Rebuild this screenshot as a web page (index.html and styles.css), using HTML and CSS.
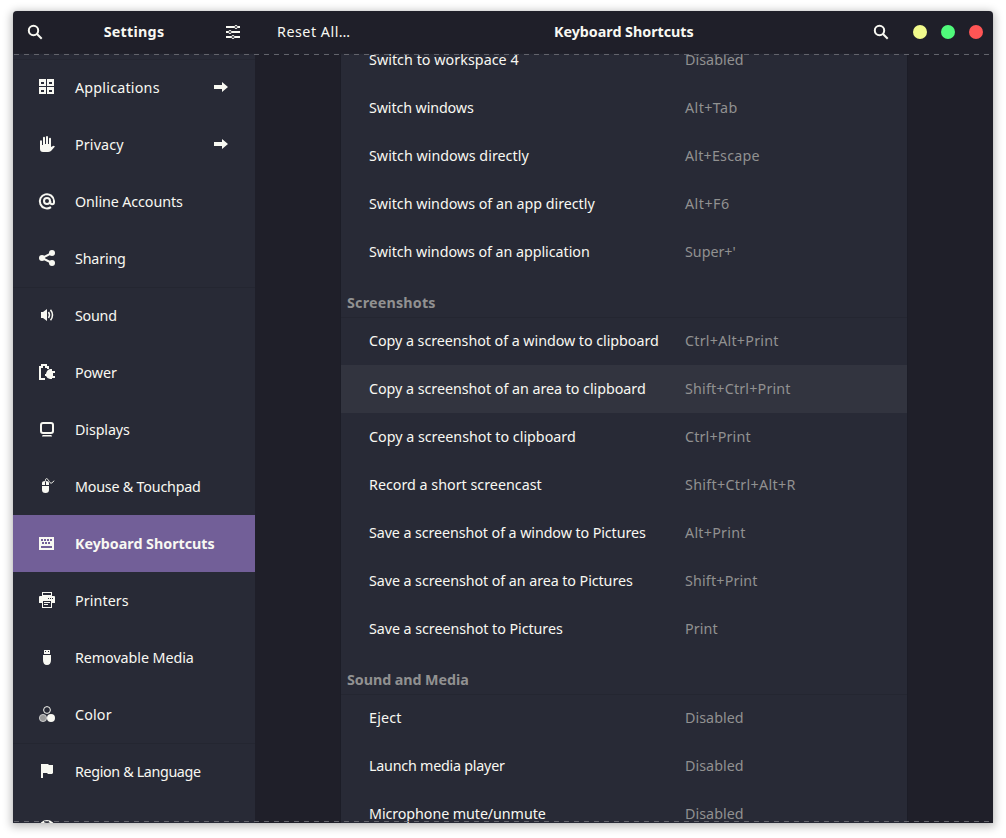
FILE: index.html
```
<!DOCTYPE html>
<html lang="en">
<head>
<meta charset="utf-8">
<title>Settings</title>
<link rel="stylesheet" href="styles.css">
</head>
<body>
<div class="window">
  <header class="header">
    <div class="header-side">
      <svg class="icon" viewBox="0 0 16 16"><circle cx="6.500" cy="6.500" r="4.700" class="ln"/><path class="ln" d="M10 10l4.700 4.700"/></svg>
      <b data-w="61">Settings</b>
      <svg class="icon" viewBox="0 0 16 16"><path d="M1 2h8v2H1zM13 2h2v2h-2zM1 7h2v2H1zM7 7h8v2H7zM1 12h5v2H1zM10 12h5v2h-5z"/><g class="thin"><circle cx="11" cy="3" r="1.5"/><circle cx="5" cy="8" r="1.5"/><circle cx="8" cy="13" r="1.5"/></g></svg>
    </div>
    <div class="header-main">
      <span class="reset" data-w="74">Reset All…</span>
      <b class="title" data-w="140">Keyboard Shortcuts</b>
      <svg class="icon find" viewBox="0 0 16 16"><circle cx="6.500" cy="6.500" r="4.700" class="ln"/><path class="ln" d="M10 10l4.700 4.700"/></svg>
      <i class="dot yellow"></i><i class="dot green"></i><i class="dot red"></i>
    </div>
  </header>
  <div class="body">
    <nav class="sidebar">
      <div class="item"><svg class="icon" viewBox="0 0 16 16"><path fill-rule="evenodd" d="M0 0h7v7H0zM2 3v2h3V3zM8 0h7v7H8zM10 3v2h3V3zM0 8h7v7H0zM2 11v2h3v-2zM8 8h7v7H8zM10 11v2h3v-2z"/></svg><span data-w="85">Applications</span><svg class="icon go" viewBox="0 0 16 16"><path d="M1 6h8V3l6 5-6 5v-3H1z"/></svg></div>
      <div class="item"><svg class="icon" viewBox="0 0 16 16"><path d="M1 5.2a1 1 0 0 1 2 0V9h1V1.8a1 1 0 0 1 2 0V8h1V1a1 1 0 0 1 2 0v7h1V2.8a1 1 0 0 1 2 0V11l2.5-1.3c1 0 1.7.8 1 1.3L12 15q-1.500 1-3 1H4q-3 0-3-3z"/></svg><span data-w="49">Privacy</span><svg class="icon go" viewBox="0 0 16 16"><path d="M1 6h8V3l6 5-6 5v-3H1z"/></svg></div>
      <div class="item"><svg class="icon" viewBox="0 0 16 16"><path class="ln" d="M12 14.1A7.100 7.100 0 1 1 15 8v1.200q0 2-1.800 2T11.300 9.200V8"/><circle cx="8" cy="8" r="3" class="ln"/></svg><span data-w="108">Online Accounts</span></div>
      <div class="item"><svg class="icon" viewBox="0 0 16 16"><path class="ln" d="M13 3L3 8l10 5"/><circle cx="13" cy="3" r="3"/><circle cx="3" cy="8" r="3"/><circle cx="13" cy="13" r="3"/></svg><span data-w="51">Sharing</span></div>
      <div class="item ruled"><svg class="icon" viewBox="0 0 16 16"><path d="M2 5h2l4-3v12l-4-3H2z"/><path class="arc" d="M9.500 5q2 3 0 6M11.500 2.700q4 5.300 0 10.600"/></svg><span data-w="42">Sound</span></div>
      <div class="item"><svg class="icon" viewBox="0 0 16 16"><path d="M0 2h2V0h6v2h2v3H8V4H6V2H4v2H2v10h4v2H0z"/><path d="M6 10h1q.5-4 4-5h2v2h3v2h-2v3h2v2h-3v1h-2q-3-.5-4-3H6z"/></svg><span data-w="42">Power</span></div>
      <div class="item"><svg class="icon" viewBox="0 0 16 16"><rect class="ln" x="2" y="2" width="12" height="10" rx="2"/><path d="M4 14h8q1 0 1 1.500H3q0-1.500 1-1.500z"/></svg><span data-w="55">Displays</span></div>
      <div class="item"><svg class="icon" viewBox="0 0 16 16"><path d="M3 7V5q0-2 3-2v4zM7 3q3 0 3 2v2H7zM3 8h7v4q0 3-3.500 3T3 12z"/><path class="thin" d="M6.500 3.500C6 0 8 0 9.300 2s2 4 4 2.700L15 2.700"/></svg><span data-w="126">Mouse &amp; Touchpad</span></div>
      <div class="item selected"><svg class="icon" viewBox="0 0 16 16"><path fill-rule="evenodd" d="M0 2h15v13H0zM2 4v2h2V4zM5 4v2h2V4zM8 4v2h2V4zM11 4v2h2V4zM3 7v2h2V7zM6 7v2h2V7zM9 7v2h2V7zM2 11v2h11v-2z"/></svg><span data-w="140">Keyboard Shortcuts</span></div>
      <div class="item"><svg class="icon" viewBox="0 0 16 16"><path fill-rule="evenodd" d="M3 0h10v4H3zM4 1v2h8V1zM0 5q0-1 1-1h14q1 0 1 1v6h-3v5H3v-5H0zM4 9v6h8V9zM9 6v1h1V6zM11 6v1h1V6zM13 6v1h1V6zM5 11h6v-1H5zM5 13h4v-1H5z"/></svg><span data-w="54">Printers</span></div>
      <div class="item"><svg class="icon" viewBox="0 0 16 16"><path fill-rule="evenodd" d="M5 1h6v4H5zM6 2v1h1V2zM9 2v1h1V2zM4 6h8v5q0 5-4 5t-4-5z"/></svg><span data-w="119">Removable Media</span></div>
      <div class="item"><svg class="icon" viewBox="0 0 16 16"><circle class="thin" cx="8" cy="4" r="3.400"/><circle cx="4" cy="12" r="3.600" class="gray"/><circle cx="12" cy="12" r="4"/></svg><span data-w="37">Color</span></div>
      <div class="item ruled"><svg class="icon" viewBox="0 0 16 16"><path d="M2 1h7l1 1h4v8l-1 1H9l-1-1H4v5H2z"/></svg><span data-w="126">Region &amp; Language</span></div>
      <div class="item"><svg class="icon" viewBox="0 0 16 16"><circle class="ln" cx="8" cy="8" r="7"/><circle cx="8" cy="4.500" r="1.500"/><path d="M4 6h8v1.500H10V13H9v-3H7v3H6V7.500H4z"/></svg><span data-w="113">Universal Access</span></div>
    </nav>
    <main class="content">
      <div class="list">
        <div class="row"><span data-w="150">Switch to workspace 4</span><span class="key" data-w="59">Disabled</span></div>
        <div class="row"><span data-w="105">Switch windows</span><span class="key" data-w="53">Alt+Tab</span></div>
        <div class="row"><span data-w="160">Switch windows directly</span><span class="key" data-w="75">Alt+Escape</span></div>
        <div class="row"><span data-w="226">Switch windows of an app directly</span><span class="key" data-w="45">Alt+F6</span></div>
        <div class="row"><span data-w="221">Switch windows of an application</span><span class="key" data-w="51">Super+'</span></div>
        <h2><span data-w="89">Screenshots</span></h2>
        <div class="row"><span data-w="290">Copy a screenshot of a window to clipboard</span><span class="key" data-w="94">Ctrl+Alt+Print</span></div>
        <div class="row hover"><span data-w="277">Copy a screenshot of an area to clipboard</span><span class="key" data-w="106">Shift+Ctrl+Print</span></div>
        <div class="row"><span data-w="207">Copy a screenshot to clipboard</span><span class="key" data-w="66">Ctrl+Print</span></div>
        <div class="row"><span data-w="173">Record a short screencast</span><span class="key" data-w="111">Shift+Ctrl+Alt+R</span></div>
        <div class="row"><span data-w="277">Save a screenshot of a window to Pictures</span><span class="key" data-w="61">Alt+Print</span></div>
        <div class="row"><span data-w="264">Save a screenshot of an area to Pictures</span><span class="key" data-w="73">Shift+Print</span></div>
        <div class="row"><span data-w="194">Save a screenshot to Pictures</span><span class="key" data-w="33">Print</span></div>
        <h2><span data-w="122">Sound and Media</span></h2>
        <div class="row"><span data-w="33">Eject</span><span class="key" data-w="59">Disabled</span></div>
        <div class="row"><span data-w="136">Launch media player</span><span class="key" data-w="59">Disabled</span></div>
        <div class="row"><span data-w="177">Microphone mute/unmute</span><span class="key" data-w="59">Disabled</span></div>
      </div>
    </main>
  </div>
</div>
<script src="fit.js"></script>
</body>
</html>
```
FILE: fit.js
```
// Tracks each label so that its text fills its nominal width.
document.querySelectorAll('[data-w]').forEach(function (el) {
  var range = document.createRange();
  range.selectNodeContents(el);
  var gap = Number(el.dataset.w) - 0.3 - range.getBoundingClientRect().width;
  el.style.letterSpacing = gap / el.textContent.length + 'px';
});
```
FILE: styles.css
```
* { box-sizing: border-box; }
body {
  margin: 0;
  height: 838px;
  padding: 11px 13px 15px;
  overflow: hidden;
  background: #fff;
  color: #f8f8f2;
  font: 14.3px/20px "Noto Sans", "Open Sans", sans-serif;
}
span, b { white-space: nowrap; }
.window {
  position: relative;
  display: flex;
  flex-direction: column;
  height: 812px;
  border-radius: 4px 4px 0 0;
  background: #1f1f29;
  box-shadow: 0 2px 8px 2px rgba(0,0,0,.25), 0 0 1px rgba(0,0,0,.2);
}
/* Dashed overshoot hints at both ends of the scrolled area. */
.body::before, .body::after {
  content: "";
  position: absolute;
  left: 0;
  right: 3px;
  height: 1px;
  background: repeating-linear-gradient(90deg, transparent 0 1px, #62636b 1px 6px, transparent 6px 10px);
}
.body::before { top: 43px; }
.body::after { bottom: 1px; }
.header { display: flex; flex: 0 0 42px; height: 42px; }
.header-side { width: 242px; display: flex; align-items: center; justify-content: space-between; padding: 0 14px; }
.header-main { flex: 1; display: flex; align-items: center; padding: 0 10px 0 22px; }
.reset { flex: 0 0 277px; }
.title { flex: 0 0 319px; }
.find { margin-right: 24px; }
.dot { flex: none; width: 14px; height: 14px; border-radius: 50%; margin-right: 14px; }
.dot:last-child { margin-right: 0; }
.yellow { background: #f1fa8c; }
.green { background: #50fa7b; }
.red { background: #ff5555; }
.icon { width: 16px; height: 16px; flex: none; fill: #f8f8f2; overflow: visible; }
.ln { fill: none; stroke: #f8f8f2; stroke-width: 2; }
.arc { fill: none; stroke: #f8f8f2; stroke-width: 1.5; }
.thin { fill: none; stroke: #f8f8f2; stroke-width: 1; }
.gray { fill: #999; stroke: #ddd; stroke-width: .8; }
.body { flex: 1; min-height: 0; display: flex; overflow: hidden; border-top: 1px solid #20212b; }
.sidebar { width: 242px; padding-top: 5px; background: #282a36; }
.item { height: 57px; display: flex; align-items: center; padding: 0 26px; }
.item:first-child, .ruled { box-shadow: inset 0 1px #242631; }
.item span { margin-left: 20px; }
.item .icon { margin-top: -2px; }
.item .go { margin-left: auto; }
.selected { background: #725f98; font-weight: 700; }
.content { flex: 1; padding-left: 85px; }
.list { width: 568px; background: #282a36; border: solid #1c1d27; border-width: 0 1px; margin-top: -18px; }
.row { height: 48px; display: flex; align-items: center; padding-left: 28px; }
.row span:first-child { flex: 0 0 316px; }
.key { color: #919191; }
.hover { background: #32343f; }
h2 { margin: 0; height: 41px; padding: 17px 6px 0; font-size: 14.3px; line-height: 20px; color: #919191; box-shadow: 0 1px #242631; }
```
